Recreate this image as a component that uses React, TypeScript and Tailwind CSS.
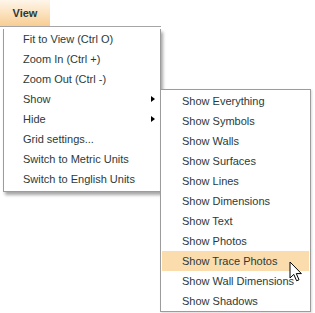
const MAIN = [
  { label: "Fit to View (Ctrl O)" },
  { label: "Zoom In (Ctrl +)" },
  { label: "Zoom Out (Ctrl -)" },
  { label: "Show", sub: true },
  { label: "Hide", sub: true },
  { label: "Grid settings..." },
  { label: "Switch to Metric Units" },
  { label: "Switch to English Units" },
];

const SHOW = [
  "Show Everything",
  "Show Symbols",
  "Show Walls",
  "Show Surfaces",
  "Show Lines",
  "Show Dimensions",
  "Show Text",
  "Show Photos",
  "Show Trace Photos",
  "Show Wall Dimensions",
  "Show Shadows",
];

function Cursor() {
  return (
    <svg width="14" height="22" viewBox="0 0 14 22" className="absolute left-[289px] top-[261px]">
      <path
        d="M1 1 L1 17 L4.8 13.4 L7.6 19.8 L10 18.8 L7.3 12.6 L12.4 12.6 Z"
        fill="white"
        stroke="black"
        strokeWidth="1"
        strokeLinejoin="miter"
      />
    </svg>
  );
}

export default function App() {
  return (
    <div className="relative w-[315px] h-[313px] overflow-hidden bg-white font-['Liberation_Sans',Arial,sans-serif] text-[11px] text-[#2b3a3a]">
      <div className="w-[161px] h-[27px] border-b border-[#a5a5a5]">
        <div className="w-[50px] h-[26px] flex items-center justify-center font-bold bg-gradient-to-b from-[#fef6ea] to-[#f8cd92]">
          View
        </div>
      </div>

      <div className="ml-[3px] mt-[2px] w-[158px] border-x border-b border-[#9c9c9c] bg-white pb-[2px] shadow-[2px_3px_3px_rgba(0,0,0,0.35)]">
        {MAIN.map((item) => (
          <div key={item.label} className="h-[20px] flex items-center justify-between pl-[19px] pr-[5px]">
            <span>{item.label}</span>
            {item.sub && (
              <span className="w-0 h-0 border-y-[3.5px] border-y-transparent border-l-[4px] border-l-black" />
            )}
          </div>
        ))}
      </div>

      <div className="absolute left-[160px] top-[89px] w-[151px] border border-[#9c9c9c] bg-white px-[1px] pt-[1px] shadow-[1px_1px_2px_rgba(0,0,0,0.15)]">
        {SHOW.map((label) => (
          <div
            key={label}
            className={
              label === "Show Trace Photos"
                ? "h-[20px] flex items-center pl-[20px] bg-[#fbdcac]"
                : "h-[20px] flex items-center pl-[20px]"
            }
          >
            {label}
          </div>
        ))}
      </div>

      <Cursor />
    </div>
  );
}
